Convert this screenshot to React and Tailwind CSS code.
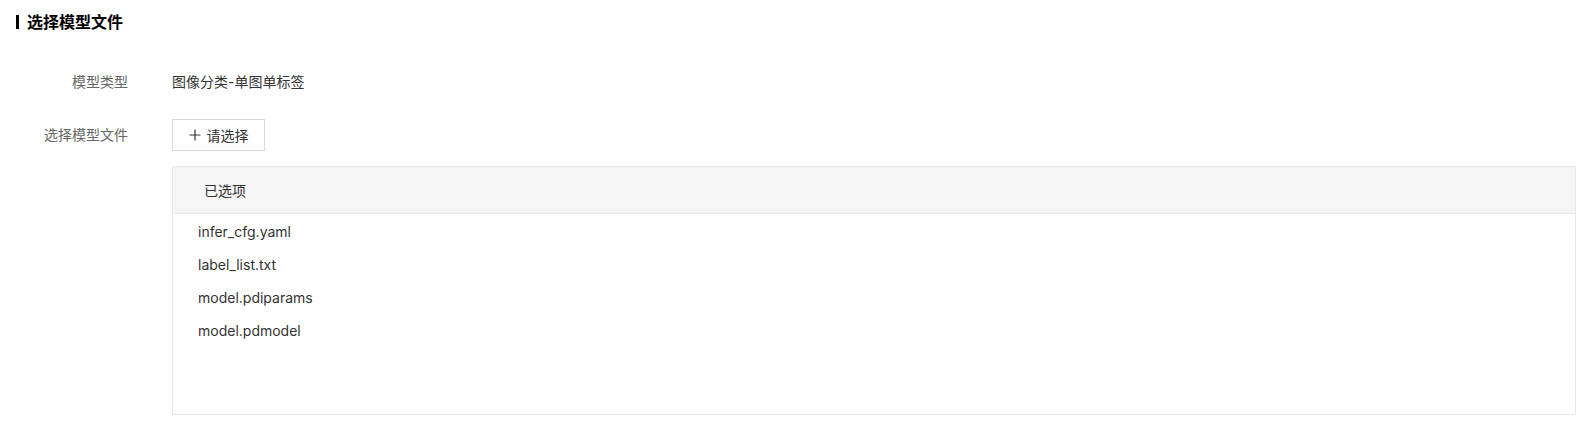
import React from "react";

const files = ["infer_cfg.yaml", "label_list.txt", "model.pdiparams", "model.pdmodel"];

const App = () => {
  return (
    <div
      className="min-h-screen bg-white pl-4 pr-[9px] text-[14px] text-[#333]"
      style={{ fontFamily: '"Inter", "Noto Sans CJK SC", sans-serif' }}
    >
      {/* section title */}
      <div className="flex items-center h-[42px] pt-px">
        <span className="w-[3px] h-[14px] bg-black mr-2" />
        <h2 className="text-[16px] font-bold text-black leading-none">选择模型文件</h2>
      </div>

      <div className="mt-[24px] flex items-center h-[30px]">
        <label className="w-[112px] text-right text-[#666]">模型类型</label>
        <div className="ml-[44px]">图像分类-单图单标签</div>
      </div>

      <div className="mt-[23px] flex items-start">
        <label className="w-[112px] text-right text-[#666] leading-[32px]">选择模型文件</label>
        <div className="ml-[44px] flex-1">
          <button className="h-[32px] w-[93px] border border-[#d9d9d9] bg-white flex items-center justify-center gap-[6px] text-[#333]">
            <svg width="12" height="12" viewBox="0 0 12 12" fill="none" stroke="#333" strokeWidth="1.2">
              <path d="M6 0.5v11M0.5 6h11" />
            </svg>
            <span>请选择</span>
          </button>

          <div className="mt-[15px] border border-[#e8e8e8] h-[249px]">
            <div className="h-[47px] bg-[#f5f5f5] border-b border-[#e8e8e8] flex items-center pl-[31px] text-[#333]">
              已选项
            </div>
            <ul className="pt-px pl-[25px]">
              {files.map((f) => (
                <li key={f} className="h-[33px] flex items-center text-[#333]">
                  {f}
                </li>
              ))}
            </ul>
          </div>
        </div>
      </div>
    </div>
  );
};

export default App;
